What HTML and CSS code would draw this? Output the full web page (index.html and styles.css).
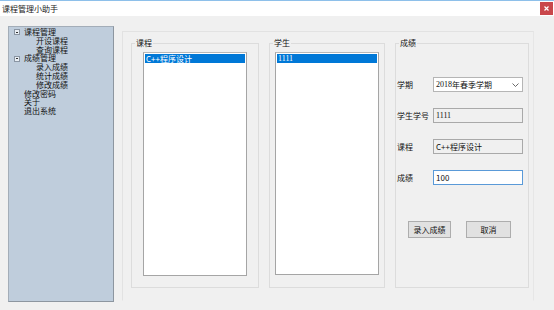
FILE: index.html
```html
<!DOCTYPE html>
<html lang="zh">
<head>
  <meta charset="UTF-8">
  <title>课程管理小助手</title>
  <link rel="stylesheet" href="styles.css">
</head>
<body>
  <div class="window">
    <div class="titlebar">
      <span class="title">课程管理小助手</span>
      <span class="close">
        <svg width="5" height="5" viewBox="0 0 5 5"><path d="M0.5 0.5 L4.5 4.5 M4.5 0.5 L0.5 4.5" stroke="#fff" stroke-width="1.2"/></svg>
      </span>
    </div>

    <div class="main">
      <ul class="tree">
        <li class="node"><span class="toggle"></span>课程管理</li>
        <li class="child">开设课程</li>
        <li class="child">查询课程</li>
        <li class="node"><span class="toggle"></span>成绩管理</li>
        <li class="child">录入成绩</li>
        <li class="child">统计成绩</li>
        <li class="child">修改成绩</li>
        <li class="leaf">修改密码</li>
        <li class="leaf">关于</li>
        <li class="leaf">退出系统</li>
      </ul>

      <div class="content">
        <fieldset class="group group-course">
          <legend>课程</legend>
          <div class="listbox">
            <div class="item selected">C++程序设计</div>
          </div>
        </fieldset>

        <fieldset class="group group-student">
          <legend>学生</legend>
          <div class="listbox">
            <div class="item selected digits">1111</div>
          </div>
        </fieldset>

        <fieldset class="group group-score">
          <legend>成绩</legend>
          <div class="form">
            <label>学期</label>
            <div class="field combo"><span class="digits">2018</span>年春季学期
              <svg class="chevron" width="7" height="4" viewBox="0 0 7 4"><path d="M0.5 0.5 L3.5 3.5 L6.5 0.5" fill="none" stroke="#444" stroke-width="0.8"/></svg>
            </div>
            <label>学生学号</label>
            <div class="field readonly digits">1111</div>
            <label>课程</label>
            <div class="field readonly">C++程序设计</div>
            <label>成绩</label>
            <div class="field editable">100</div>
          </div>
          <div class="buttons">
            <button class="btn">录入成绩</button>
            <button class="btn btn-cancel">取消</button>
          </div>
        </fieldset>
      </div>
    </div>
  </div>
</body>
</html>
```

FILE: styles.css
```css
* {
  box-sizing: border-box;
}

body {
  margin: 0;
  padding: 0;
  width: 554px;
  height: 310px;
  overflow: hidden;
  font-family: "Noto Sans CJK SC", "Noto Sans", sans-serif;
  font-size: 8px;
  color: #111;
  background: #f0f0f0;
}

.window {
  width: 554px;
  height: 310px;
  background: #f0f0f0;
}

.titlebar {
  height: 16px;
  background: #fff;
  border-top: 1px solid #8ec0ea;
  display: flex;
  justify-content: space-between;
  align-items: flex-start;
}

.title {
  margin: 2px 0 0 2px;
  line-height: 12px;
  font-size: 8px;
  color: #222;
}

.close {
  width: 13px;
  height: 13px;
  margin: 1px 1px 0 0;
  background: #c9474b;
  display: flex;
  align-items: center;
  justify-content: center;
}

.main {
  display: flex;
  align-items: flex-start;
  padding-left: 8px;
}

/* left navigation tree */
.tree {
  list-style: none;
  margin: 10px 0 0 0;
  padding: 1px 0 0 0;
  width: 106px;
  height: 276px;
  background: #bfcddc;
  border: 1px solid #a3adb8;
  border-right-color: #8d96a0;
  border-bottom-color: #8d96a0;
}

.tree li {
  line-height: 8.8px;
  height: 8.8px;
  font-size: 8px;
  white-space: nowrap;
}

.tree .node {
  padding-left: 5px;
  display: flex;
  align-items: center;
}

.tree .child {
  padding-left: 27px;
}

.tree .leaf {
  padding-left: 15px;
}

.toggle {
  width: 6px;
  height: 6px;
  border: 1px solid #8a95a3;
  background: #e8eef4;
  margin-right: 4px;
  position: relative;
}

.toggle::after {
  content: "";
  position: absolute;
  left: 1px;
  right: 1px;
  top: 1.5px;
  height: 1px;
  background: #333;
}

/* right panel */
.content {
  margin: 15px 0 0 8px;
  width: 412px;
  height: 270px;
  border: 1px solid #e2e2e2;
  border-right-color: #e6e6e6;
  border-bottom-color: transparent;
  padding: 6px 0 0 8px;
  display: flex;
  align-items: flex-start;
  gap: 10px;
}

.group {
  margin: 0;
  height: 250px;
  border: 1px solid #dcdcdc;
  display: flex;
  flex-direction: column;
  min-inline-size: 0;
}

.group legend {
  padding: 0 1px;
  line-height: 10px;
  font-size: 8px;
}

.group-course {
  width: 128px;
  padding: 4px 11px 11px 11px;
}

.group-course legend {
  margin-left: -8px;
}

.group-student {
  width: 116px;
  padding: 4px 5px 12px 5px;
}

.group-student legend {
  margin-left: -2px;
}

.group-score {
  width: 134px;
  padding: 29px 3px 0 1px;
}

.group-score legend {
  margin-left: 2px;
}

.listbox {
  flex: 1;
  background: #fff;
  border: 1px solid #a5a5a5;
  border-top-color: #b8b8b8;
  padding: 1px;
}

.item {
  height: 9px;
  line-height: 9px;
  padding-left: 1px;
  white-space: nowrap;
}

.item.selected {
  background: #0078d7;
  color: #fff;
}

.digits {
  font-family: "Liberation Serif", "Noto Sans CJK SC", serif;
}

/* score form */
.form {
  display: grid;
  grid-template-columns: 36px 90px;
  row-gap: 16px;
  align-items: center;
}

.form label {
  line-height: 15px;
  white-space: nowrap;
}

.field {
  height: 15px;
  line-height: 13px;
  padding-left: 2px;
  border: 1px solid #acacac;
  white-space: nowrap;
}

.combo {
  background: #fff;
  border-color: #b5b5b5;
  display: flex;
  align-items: center;
}

.chevron {
  margin-left: auto;
  margin-right: 3px;
}

.readonly {
  background: #f0f0f0;
  border-color: #a9a9a9;
}

.editable {
  background: #fff;
  border-color: #5a9ad8;
}

.buttons {
  display: flex;
  gap: 15px;
  margin: 36px 0 0 11px;
}

.btn {
  width: 43px;
  height: 17px;
  padding: 0;
  font-family: "Noto Sans CJK SC", sans-serif;
  font-size: 8px;
  color: #111;
  background: #e1e1e1;
  border: 1px solid #adadad;
}

.btn-cancel {
  width: 45px;
}
```
